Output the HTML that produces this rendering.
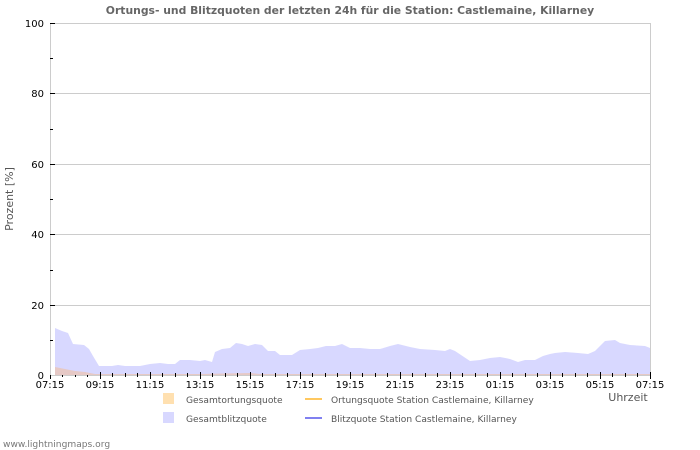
<!DOCTYPE html>
<html><head><meta charset="utf-8"><style>
html,body{margin:0;padding:0;background:#fff;width:700px;height:450px;overflow:hidden}
svg{display:block;font-family:"DejaVu Sans","Liberation Sans",sans-serif}
</style></head><body>
<svg width="700" height="450" viewBox="0 0 700 450" xmlns="http://www.w3.org/2000/svg">
<text x="350" y="14" text-anchor="middle" font-size="10.8" font-weight="bold" fill="#666">Ortungs- und Blitzquoten der letzten 24h für die Station: Castlemaine, Killarney</text>
<g stroke="#ccc" stroke-width="1">
<line x1="50" y1="23.5" x2="650" y2="23.5"/>
<line x1="50" y1="93.5" x2="650" y2="93.5"/>
<line x1="50" y1="164.5" x2="650" y2="164.5"/>
<line x1="50" y1="234.5" x2="650" y2="234.5"/>
<line x1="50" y1="305.5" x2="650" y2="305.5"/>
<line x1="50.5" y1="23" x2="50.5" y2="375"/>
<line x1="650.5" y1="23" x2="650.5" y2="375"/>
</g>
<polygon fill="#d8d8ff" points="55,375 55,328 62,331 68,333 73,344 84,345 89,349 93,356 99,366 105,366 112,366 118,365 125,366 140,366 150,364 160,363 168,364 175,364 180,360 190,360 200,361 205,360 212,362 215,352 222,349 230,348 236,343 242,344 248,346 255,344 262,345 268,351 275,351 280,355 292,355 300,350 310,349 318,348 326,346 335,346 342,344 350,348 360,348 370,349 380,349 390,346 398,344 410,347 420,349 435,350 445,351 450,349 455,351 470,361 480,360 490,358 500,357 510,359 518,362 525,360 535,360 543,356 550,354 555,353 565,352 578,353 588,354 595,351 605,341 615,340 620,343 630,345 645,346 650,348 650,375"/>
<polygon fill="#e6c9c6" points="55,375 55,367 65,369 75,371 85,372 95,374 105,374 200,374 250,373 260,374 650,374 650,375"/>
<g stroke="#000" stroke-width="1">
<line x1="50" y1="23.5" x2="55" y2="23.5"/><line x1="50" y1="58.5" x2="53" y2="58.5"/>
<line x1="50" y1="93.5" x2="55" y2="93.5"/><line x1="50" y1="129.5" x2="53" y2="129.5"/>
<line x1="50" y1="164.5" x2="55" y2="164.5"/><line x1="50" y1="199.5" x2="53" y2="199.5"/>
<line x1="50" y1="234.5" x2="55" y2="234.5"/><line x1="50" y1="270.5" x2="53" y2="270.5"/>
<line x1="50" y1="305.5" x2="55" y2="305.5"/><line x1="50" y1="340.5" x2="53" y2="340.5"/>
</g>
<line x1="50" y1="375.5" x2="651" y2="375.5" stroke="#ccc"/>
<g font-size="10" fill="#000" text-anchor="end">
<text x="44" y="27">100</text><text x="44" y="97">80</text><text x="44" y="168">60</text>
<text x="44" y="238">40</text><text x="44" y="309">20</text><text x="44" y="379">0</text>
</g>
<g font-size="10" fill="#000" text-anchor="middle">
<text x="50" y="388">07:15</text><text x="100" y="388">09:15</text><text x="150" y="388">11:15</text>
<text x="200" y="388">13:15</text><text x="250" y="388">15:15</text><text x="300" y="388">17:15</text>
<text x="350" y="388">19:15</text><text x="400" y="388">21:15</text><text x="450" y="388">23:15</text>
<text x="500" y="388">01:15</text><text x="550" y="388">03:15</text><text x="600" y="388">05:15</text>
<text x="650" y="388">07:15</text>
</g>
<text x="628" y="401" text-anchor="middle" font-size="11" fill="#555">Uhrzeit</text>
<text transform="translate(13,199) rotate(-90)" text-anchor="middle" font-size="11" fill="#555">Prozent   [%]</text>
<rect x="163" y="393" width="11" height="11" fill="#ffe0b0"/>
<rect x="163" y="412" width="11" height="11" fill="#d8d8ff"/>
<line x1="305" y1="399" x2="322" y2="399" stroke="#ffc860" stroke-width="2"/>
<line x1="305" y1="418" x2="322" y2="418" stroke="#8080f0" stroke-width="2"/>
<g font-size="9.1" fill="#555">
<text x="186" y="403">Gesamtortungsquote</text>
<text x="186" y="422">Gesamtblitzquote</text>
<text x="331" y="403">Ortungsquote Station Castlemaine, Killarney</text>
<text x="331" y="422">Blitzquote Station Castlemaine, Killarney</text>
</g>
<text x="3" y="447" font-size="9.1" fill="#777">www.lightningmaps.org</text>
<g stroke="#000" stroke-width="1">
<line x1="50.5" y1="375" x2="50.5" y2="379"/><line x1="62.5" y1="375" x2="62.5" y2="377"/><line x1="75.5" y1="375" x2="75.5" y2="377"/><line x1="87.5" y1="375" x2="87.5" y2="377"/>
<line x1="100.5" y1="372" x2="100.5" y2="379"/><line x1="112.5" y1="373" x2="112.5" y2="377"/><line x1="125.5" y1="373" x2="125.5" y2="377"/><line x1="137.5" y1="373" x2="137.5" y2="377"/>
<line x1="150.5" y1="372" x2="150.5" y2="379"/><line x1="162.5" y1="373" x2="162.5" y2="377"/><line x1="175.5" y1="373" x2="175.5" y2="377"/><line x1="187.5" y1="373" x2="187.5" y2="377"/>
<line x1="200.5" y1="372" x2="200.5" y2="379"/><line x1="212.5" y1="373" x2="212.5" y2="377"/><line x1="225.5" y1="373" x2="225.5" y2="377"/><line x1="237.5" y1="373" x2="237.5" y2="377"/>
<line x1="250.5" y1="372" x2="250.5" y2="379"/><line x1="262.5" y1="373" x2="262.5" y2="377"/><line x1="275.5" y1="373" x2="275.5" y2="377"/><line x1="287.5" y1="373" x2="287.5" y2="377"/>
<line x1="300.5" y1="372" x2="300.5" y2="379"/><line x1="312.5" y1="373" x2="312.5" y2="377"/><line x1="325.5" y1="373" x2="325.5" y2="377"/><line x1="337.5" y1="373" x2="337.5" y2="377"/>
<line x1="350.5" y1="372" x2="350.5" y2="379"/><line x1="362.5" y1="373" x2="362.5" y2="377"/><line x1="375.5" y1="373" x2="375.5" y2="377"/><line x1="387.5" y1="373" x2="387.5" y2="377"/>
<line x1="400.5" y1="372" x2="400.5" y2="379"/><line x1="412.5" y1="373" x2="412.5" y2="377"/><line x1="425.5" y1="373" x2="425.5" y2="377"/><line x1="437.5" y1="373" x2="437.5" y2="377"/>
<line x1="450.5" y1="372" x2="450.5" y2="379"/><line x1="462.5" y1="373" x2="462.5" y2="377"/><line x1="475.5" y1="373" x2="475.5" y2="377"/><line x1="487.5" y1="373" x2="487.5" y2="377"/>
<line x1="500.5" y1="372" x2="500.5" y2="379"/><line x1="512.5" y1="373" x2="512.5" y2="377"/><line x1="525.5" y1="373" x2="525.5" y2="377"/><line x1="537.5" y1="373" x2="537.5" y2="377"/>
<line x1="550.5" y1="372" x2="550.5" y2="379"/><line x1="562.5" y1="373" x2="562.5" y2="377"/><line x1="575.5" y1="373" x2="575.5" y2="377"/><line x1="587.5" y1="373" x2="587.5" y2="377"/>
<line x1="600.5" y1="372" x2="600.5" y2="379"/><line x1="612.5" y1="373" x2="612.5" y2="377"/><line x1="625.5" y1="373" x2="625.5" y2="377"/><line x1="637.5" y1="373" x2="637.5" y2="377"/>
<line x1="650.5" y1="372" x2="650.5" y2="379"/>
</g>
</svg>
</body></html>
